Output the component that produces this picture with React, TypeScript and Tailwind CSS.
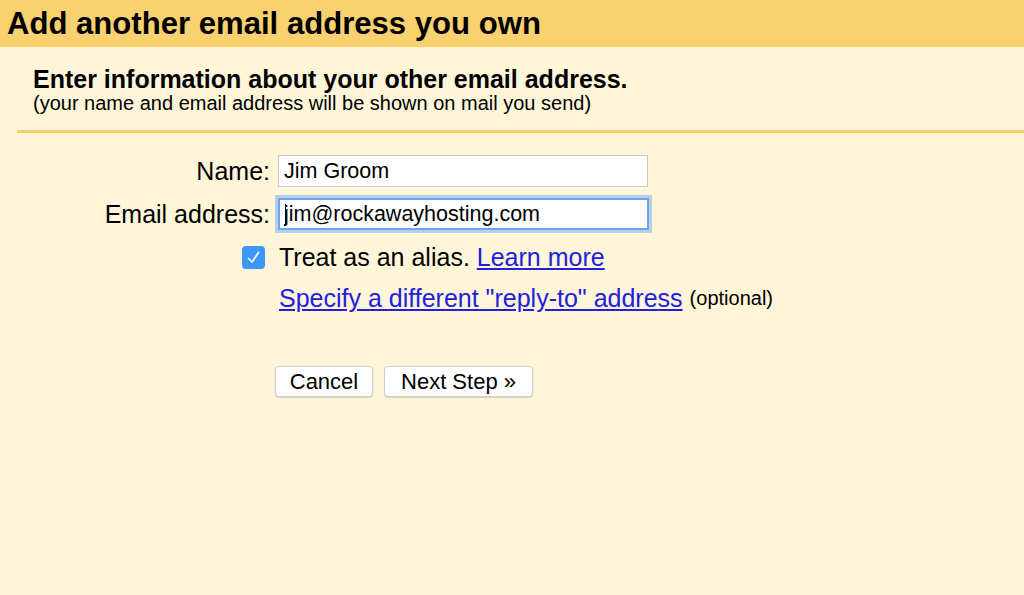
import React, { useState } from 'react';

export default function App() {
  const [name, setName] = useState('Jim Groom');
  const [email, setEmail] = useState('jim@rockawayhosting.com');
  const [alias, setAlias] = useState(true);

  return (
    <div
      className="min-h-[595px] w-full bg-[#fff6d9] text-black"
      style={{ fontFamily: '"Liberation Sans", Arial, sans-serif' }}
    >
      <div className="h-[47px] bg-[#f9d16f] px-[7px] flex items-center">
        <h1 className="text-[31.1px] leading-[34px] font-bold">Add another email address you own</h1>
      </div>

      <div className="ml-[17px] border-b-[3px] border-[#f8cd6b] pt-[19px] pb-[16px] pl-[16px]">
        <div className="text-[25px] leading-[26px] font-bold">Enter information about your other email address.</div>
        <div className="text-[20px] leading-[22px]">(your name and email address will be shown on mail you send)</div>
      </div>

      <form className="pt-[22px]" onSubmit={(e) => e.preventDefault()}>
        {/* name */}
        <div className="flex items-center">
          <label className="w-[270px] text-right text-[25px] leading-[28px]">Name:</label>
          <input
            className="ml-[8px] w-[370px] h-[32px] border border-[#c9c9c9] bg-white px-[5px] text-[21.5px] outline-none"
            value={name}
            onChange={(e) => setName(e.target.value)}
          />
        </div>

        {/* email */}
        <div className="flex items-center mt-[11px]">
          <label className="w-[270px] text-right text-[25px] leading-[28px]">Email address:</label>
          <div className="relative ml-[8px]">
            <input
              className="w-[371px] h-[32px] border-2 border-[#6aa6f2] bg-white pl-[4px] pr-[5px] text-[21.5px] outline-none shadow-[0_0_0_3px_rgba(125,175,240,0.55)]"
              value={email}
              onChange={(e) => setEmail(e.target.value)}
            />
            <span className="absolute left-[7px] top-[6px] h-[21px] w-px bg-black" />
          </div>
        </div>

        {/* alias */}
        <div className="flex items-center mt-[15px] h-[24px]">
          <div className="w-[270px] flex justify-end pr-[5px]">
            <button
              type="button"
              onClick={() => setAlias(!alias)}
              className="w-[23px] h-[23px] rounded-[4px] bg-[#3d97f7] flex items-center justify-center"
            >
              {alias && (
                <svg width="17" height="17" viewBox="0 0 17 17" fill="none">
                  <path d="M3.5 9.5 L7 13 L13.5 3.5" stroke="white" strokeWidth="1.7" strokeLinecap="round" strokeLinejoin="round" />
                </svg>
              )}
            </button>
          </div>
          <div className="ml-[9px] text-[25px] leading-[24px]">
            Treat as an alias.{' '}
            <a href="#" className="text-[#2020e0] underline">Learn more</a>
          </div>
        </div>

        {/* reply-to */}
        <div className="flex items-center mt-[17px] h-[24px]">
          <div className="w-[279px]" />
          <a href="#" className="text-[25px] leading-[24px] text-[#2020e0] underline">Specify a different "reply-to" address</a>
          <span className="ml-[7px] text-[20px] leading-[24px]">(optional)</span>
        </div>

        {/* buttons */}
        <div className="flex mt-[56px] pl-[275px] gap-[11px]">
          <button
            type="button"
            className="w-[98px] h-[31px] rounded-[4px] border border-[#cfcfcf] bg-white text-[22px] leading-none shadow-[0_1px_1px_rgba(0,0,0,0.15)]"
          >
            Cancel
          </button>
          <button
            type="submit"
            className="w-[149px] h-[31px] rounded-[4px] border border-[#cfcfcf] bg-white text-[22px] leading-none shadow-[0_1px_1px_rgba(0,0,0,0.15)]"
          >
            Next Step »
          </button>
        </div>
      </form>
    </div>
  );
}
